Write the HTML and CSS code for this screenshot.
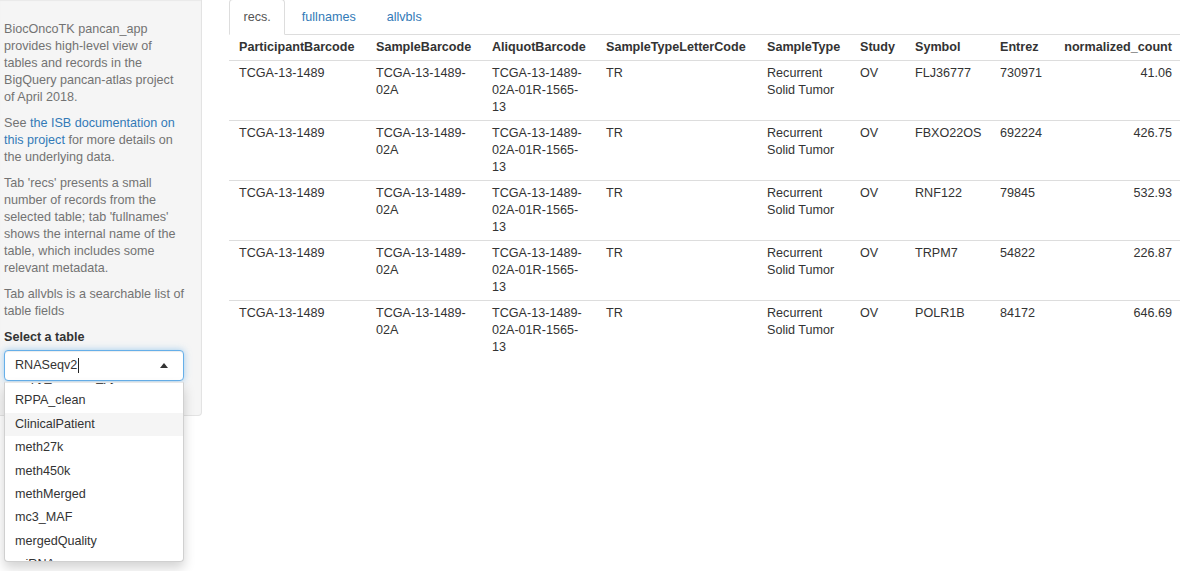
FILE: index.html
```html
<!DOCTYPE html>
<html lang="en">
<head>
<meta charset="utf-8">
<title>BiocOncoTK pancan_app</title>
<link rel="stylesheet" href="styles.css">
</head>
<body>
<div class="page">
  <aside class="well">
    <p class="help">BiocOncoTK pancan_app provides high-level view of tables and records in the BigQuery pancan-atlas project of April 2018.</p>
    <p class="help">See <a href="#">the ISB documentation on this project</a> for more details on the underlying data.</p>
    <p class="help">Tab 'recs' presents a small number of records from the selected table; tab 'fullnames' shows the internal name of the table, which includes some relevant metadata.</p>
    <p class="help">Tab allvbls is a searchable list of table fields</p>
    <div class="form-group">
      <label class="control-label">Select a table</label>
      <div class="selectize">
        <div class="sel-input">
          <span class="sel-value">RNASeqv2</span><span class="sel-cursor"></span>
          <span class="sel-caret"></span>
        </div>
        <div class="sel-dropdown">
          <div class="sel-options">
            <div class="sel-option">Copy_Number_py</div>
            <div class="sel-option">RPPA_clean</div>
            <div class="sel-option active">ClinicalPatient</div>
            <div class="sel-option">meth27k</div>
            <div class="sel-option">meth450k</div>
            <div class="sel-option">methMerged</div>
            <div class="sel-option">mc3_MAF</div>
            <div class="sel-option">mergedQuality</div>
            <div class="sel-option">miRNA</div>
          </div>
        </div>
      </div>
    </div>
  </aside>
  <main class="main">
    <ul class="nav-tabs">
      <li class="tab active"><a href="#">recs.</a></li>
      <li class="tab"><a href="#">fullnames</a></li>
      <li class="tab"><a href="#">allvbls</a></li>
    </ul>
    <table class="data">
      <colgroup>
        <col class="c1"><col class="c2"><col class="c3"><col class="c4"><col class="c5"><col class="c6"><col class="c7"><col class="c8"><col class="c9">
      </colgroup>
      <thead>
        <tr>
          <th>ParticipantBarcode</th><th>SampleBarcode</th><th>AliquotBarcode</th><th>SampleTypeLetterCode</th><th>SampleType</th><th>Study</th><th>Symbol</th><th>Entrez</th><th class="num">normalized_count</th>
        </tr>
      </thead>
      <tbody>
        <tr><td>TCGA-13-1489</td><td>TCGA-13-1489-02A</td><td>TCGA-13-1489-02A-01R-1565-13</td><td>TR</td><td>Recurrent Solid Tumor</td><td>OV</td><td>FLJ36777</td><td>730971</td><td class="num">41.06</td></tr>
        <tr><td>TCGA-13-1489</td><td>TCGA-13-1489-02A</td><td>TCGA-13-1489-02A-01R-1565-13</td><td>TR</td><td>Recurrent Solid Tumor</td><td>OV</td><td>FBXO22OS</td><td>692224</td><td class="num">426.75</td></tr>
        <tr><td>TCGA-13-1489</td><td>TCGA-13-1489-02A</td><td>TCGA-13-1489-02A-01R-1565-13</td><td>TR</td><td>Recurrent Solid Tumor</td><td>OV</td><td>RNF122</td><td>79845</td><td class="num">532.93</td></tr>
        <tr><td>TCGA-13-1489</td><td>TCGA-13-1489-02A</td><td>TCGA-13-1489-02A-01R-1565-13</td><td>TR</td><td>Recurrent Solid Tumor</td><td>OV</td><td>TRPM7</td><td>54822</td><td class="num">226.87</td></tr>
        <tr><td>TCGA-13-1489</td><td>TCGA-13-1489-02A</td><td>TCGA-13-1489-02A-01R-1565-13</td><td>TR</td><td>Recurrent Solid Tumor</td><td>OV</td><td>POLR1B</td><td>84172</td><td class="num">646.69</td></tr>
      </tbody>
    </table>
  </main>
</div>
</body>
</html>
```
FILE: styles.css
```css
* { box-sizing: border-box; }
html, body { margin: 0; padding: 0; background: #fff; }
html { height: 100%; }
body {
  min-height: 571px;
  height: 100%;
  font-family: "Liberation Sans", Arial, Helvetica, sans-serif;
  font-size: 12.6px;
  line-height: 17px;
  color: #333;
}
a { color: #337ab7; text-decoration: none; }

.page {
  display: flex;
  align-items: flex-start;
  gap: 27px;
  width: 1185px;
  min-height: 571px;
}

/* sidebar */
.well {
  flex: 0 0 202px;
  width: 202px;
  background: #f5f5f5;
  border-right: 1px solid #e3e3e3;
  border-bottom: 1px solid #e3e3e3;
  border-bottom-right-radius: 4px;
  box-shadow: inset 0 1px 1px rgba(0,0,0,.05);
  padding: 21px 14.6px 34px 4px;
  position: relative;
  z-index: 2;
}
.help {
  margin: 0 0 9px;
  color: #737373;
}
.form-group { margin: 0; }
.control-label {
  display: block;
  font-weight: bold;
  color: #333;
  margin-bottom: 4px;
}
.selectize { position: relative; width: 180px; }
.sel-input {
  display: flex;
  align-items: center;
  height: 31px;
  padding: 0 10px;
  background: #fff;
  border: 1px solid #66afe9;
  border-radius: 4px;
  box-shadow: inset 0 1px 1px rgba(0,0,0,.075), 0 0 7px rgba(102,175,233,.6);
  color: #333;
}
.sel-value { white-space: nowrap; }
.sel-cursor {
  display: inline-block;
  width: 1px;
  height: 15px;
  background: #222;
  margin-left: 1px;
}
.sel-caret {
  margin-left: auto;
  margin-right: 5px;
  width: 0;
  height: 0;
  border-style: solid;
  border-width: 0 4.5px 5px 4.5px;
  border-color: transparent transparent #333 transparent;
}
.sel-dropdown {
  position: absolute;
  top: calc(100% + 1px);
  left: 0;
  width: 180px;
  height: 180px;
  background: #fff;
  border: 1px solid #d0d0d0;
  border-top-color: #e8e8e8;
  border-radius: 0 0 4px 4px;
  box-shadow: 0 6px 12px rgba(0,0,0,.175);
  overflow: hidden;
  z-index: 10;
}
.sel-options { margin-top: -17px; }
.sel-option {
  padding: 3px 10px;
  line-height: 17.4px;
  color: #333;
  white-space: nowrap;
}
.sel-option.active { background: #f5f5f5; }

/* main */
.main {
  flex: 1 1 auto;
  min-width: 0;
  margin-right: 5px;
}
.nav-tabs {
  list-style: none;
  margin: -1px 0 0;
  padding: 0;
  display: flex;
  border-bottom: 1px solid #ddd;
}
.tab { margin-right: 2px; margin-bottom: -1px; }
.tab a {
  display: block;
  padding: 9px 13.5px 8px;
  line-height: 17px;
  border: 1px solid transparent;
  border-radius: 4px 4px 0 0;
  color: #337ab7;
}
.tab.active a {
  color: #555;
  background: #fff;
  border-color: #ddd #ddd transparent;
}

.data {
  width: 951px;
  table-layout: fixed;
  border-collapse: collapse;
  border-spacing: 0;
}
.c1 { width: 137px; }
.c2 { width: 116px; }
.c3 { width: 114px; }
.c4 { width: 161px; }
.c5 { width: 93px; }
.c6 { width: 55px; }
.c7 { width: 85px; }
.c8 { width: 64px; }
.c9 { width: 126px; }
.data th, .data td {
  padding: 4px 10px;
  text-align: left;
  vertical-align: top;
  line-height: 17px;
}
.data th {
  font-weight: bold;
  white-space: nowrap;
  border-bottom: 1px solid #ddd;
  padding-right: 6px;
}
.data td { border-top: 1px solid #ddd; height: 60px; }
.data tbody tr:first-child td { border-top: none; height: 59px; }
.data .num { text-align: right; padding-right: 8px; }
```
